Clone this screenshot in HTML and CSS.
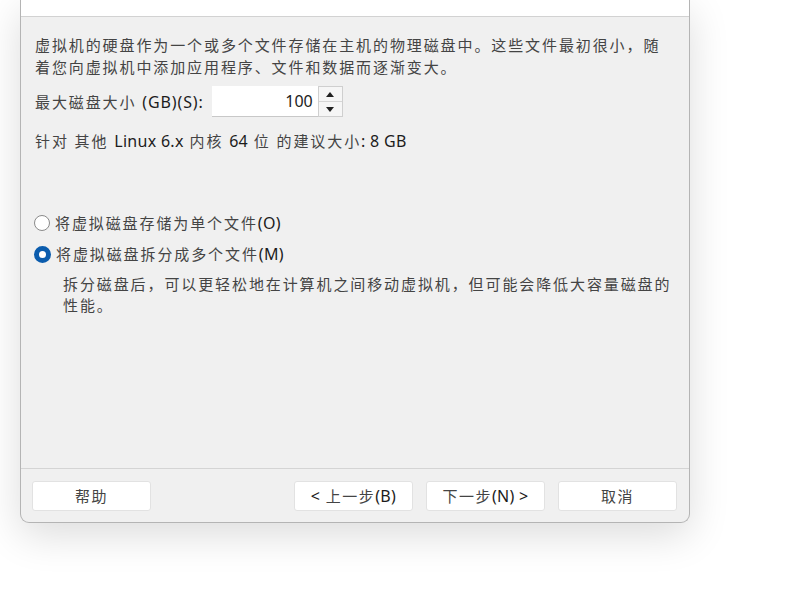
FILE: index.html
```html
<!DOCTYPE html>
<html lang="zh-CN">
<head>
<meta charset="utf-8">
<title>新建虚拟机向导</title>
<link rel="stylesheet" href="styles.css">
</head>
<body>
<div class="window">
  <div class="header"></div>
  <div class="main">
    <p class="intro">虚拟机的硬盘作为一个或多个文件存储在主机的物理磁盘中。这些文件最初很小，随<br>着您向虚拟机中添加应用程序、文件和数据而逐渐变大。</p>
    <div class="size-row">
      <span class="label">最大磁盘大小 <span class="lat">(GB)(S):</span></span>
      <div class="spin">
        <div class="spin-input">100</div>
        <div class="spin-btns">
          <div class="spin-btn"><span class="tri-up"></span></div>
          <div class="spin-btn"><span class="tri-down"></span></div>
        </div>
      </div>
    </div>
    <p class="recommend">针对 其他 <span class="lat">Linux 6.x</span> 内核 <span class="lat">64</span> 位 的建议大小<span class="lat">: 8 GB</span></p>
    <div class="options">
      <div class="radio-row"><span class="radio"></span><span>将虚拟磁盘存储为单个文件<span class="lat">(O)</span></span></div>
      <div class="radio-row"><span class="radio checked"></span><span>将虚拟磁盘拆分成多个文件<span class="lat">(M)</span></span></div>
      <p class="desc">拆分磁盘后，可以更轻松地在计算机之间移动虚拟机，但可能会降低大容量磁盘的<br>性能。</p>
    </div>
  </div>
  <div class="footer">
    <button class="btn">帮助</button>
    <div class="spacer"></div>
    <button class="btn"><span class="lat">&lt;</span> 上一步<span class="lat">(B)</span></button>
    <button class="btn">下一步<span class="lat">(N) &gt;</span></button>
    <button class="btn">取消</button>
  </div>
</div>
</body>
</html>
```
FILE: styles.css
```css
html, body {
  margin: 0;
  padding: 0;
  background: #ffffff;
}
body {
  width: 800px;
  height: 600px;
  overflow: hidden;
  font-family: "Noto Sans", "Noto Sans CJK SC", sans-serif;
  font-size: 15px;
  color: #444444;
}
.lat {
  font-size: 16px;
  letter-spacing: 0.3px;
  color: #1c1c1c;
}
.window {
  margin-left: 20px;
  width: 668px;
  height: 522px;
  background: #f0f0f0;
  border: 1px solid #b4b4b4;
  border-top: none;
  border-radius: 0 0 9px 9px;
  box-shadow: 0 12px 40px rgba(0, 0, 0, 0.14);
  display: flex;
  flex-direction: column;
  box-sizing: content-box;
}
.header {
  height: 16px;
  background: #ffffff;
  border-bottom: 1px solid #d2d2d2;
}
.main {
  flex: 1;
  padding: 17px 14px 0 14px;
}
.intro, .recommend, .desc {
  margin: 0;
  line-height: 22px;
  letter-spacing: 1.9px;
}
.size-row {
  margin-top: 8px;
  display: flex;
  align-items: center;
  gap: 8px;
  letter-spacing: 1.9px;
}
.label {
  line-height: 22px;
}
.label .lat {
  letter-spacing: 0.9px;
}
.spin {
  display: flex;
  height: 31px;
}
.spin-input {
  width: 101px;
  height: 30px;
  background: #ffffff;
  border-bottom: 1px solid #c8c8c8;
  text-align: right;
  line-height: 30px;
  padding-right: 5px;
  font-size: 16px;
  color: #1c1c1c;
  letter-spacing: 0;
}
.spin-btns {
  width: 23px;
  display: flex;
  flex-direction: column;
  border: 1px solid #cfcfcf;
  background: #f6f6f6;
}
.spin-btn {
  flex: 1;
  display: flex;
  align-items: center;
  justify-content: center;
}
.spin-btn + .spin-btn {
  border-top: 1px solid #d6d6d6;
}
.tri-up, .tri-down {
  width: 0;
  height: 0;
  border-left: 4px solid transparent;
  border-right: 4px solid transparent;
}
.tri-up {
  border-bottom: 5px solid #222;
}
.tri-down {
  border-top: 5px solid #222;
}
.recommend {
  margin-top: 13px;
}
.options {
  margin-top: 60px;
  display: flex;
  flex-direction: column;
}
.radio-row {
  display: flex;
  align-items: center;
  gap: 5px;
  line-height: 22px;
  letter-spacing: 1.9px;
  margin-left: -1px;
}
.radio-row + .radio-row {
  margin-top: 9px;
}
.radio {
  width: 14px;
  height: 14px;
  border: 1.5px solid #8a8a8a;
  border-radius: 50%;
  background: #ffffff;
  flex: none;
}
.radio.checked {
  border: 5px solid #0b5cad;
  width: 7px;
  height: 7px;
}
.desc {
  margin-top: 9px;
  margin-left: 28px;
  line-height: 21px;
}
.footer {
  height: 54px;
  border-top: 1px solid #d4d4d4;
  display: flex;
  align-items: center;
  padding: 0 12px 0 11px;
  gap: 13px;
  box-sizing: border-box;
}
.spacer {
  flex: 1;
}
.btn {
  width: 119px;
  height: 30px;
  background: #ffffff;
  border: 1px solid #e2e2e2;
  border-radius: 3px;
  font-family: "Noto Sans", "Noto Sans CJK SC", sans-serif;
  font-size: 15px;
  color: #444444;
  letter-spacing: 1.5px;
  padding: 0;
}
```
